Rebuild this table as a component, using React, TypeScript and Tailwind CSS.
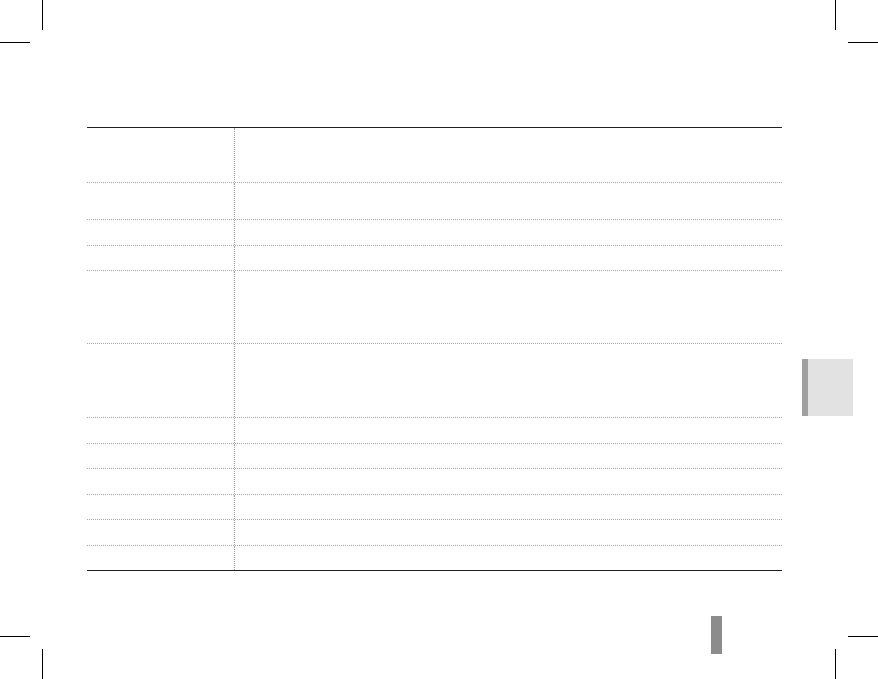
import React from "react";

const rows = [55, 37, 26, 25, 73, 74, 26, 25, 26, 25, 26, 25];

function CropMarks() {
  return (
    <>
      <div className="absolute left-[42px] top-0 w-px h-[30px] bg-black" />
      <div className="absolute left-0 top-[42px] w-[30px] h-px bg-black" />
      <div className="absolute left-[835px] top-0 w-px h-[30px] bg-black" />
      <div className="absolute left-[848px] top-[42px] w-[30px] h-px bg-black" />
      <div className="absolute left-0 top-[636px] w-[30px] h-px bg-black" />
      <div className="absolute left-[42px] top-[649px] w-px h-[30px] bg-black" />
      <div className="absolute left-[848px] top-[636px] w-[30px] h-px bg-black" />
      <div className="absolute left-[835px] top-[649px] w-px h-[30px] bg-black" />
    </>
  );
}

export default function App() {
  return (
    <div
      className="relative w-[878px] h-[679px] bg-white overflow-hidden"
      style={{ fontFamily: '"Liberation Sans", Arial, sans-serif' }}
    >
      <CropMarks />

      <div className="pt-[127px] pl-[87px] flex flex-col">
        <div className="flex items-start">
          {/* table */}
          <div className="w-[695px] border-t border-[#231f20] flex flex-col">
            {rows.map((h, i) => (
              <div
                key={i}
                className={
                  i === rows.length - 1
                    ? "flex box-border border-b border-solid border-[#231f20]"
                    : "flex box-border border-b border-dotted border-[#a8a8a8]"
                }
                style={{ height: h }}
              >
                <div className="w-[148px] h-full border-r border-dotted border-[#9a9a9a]" />
                <div className="flex-1 h-full" />
              </div>
            ))}
          </div>

          {/* side tab */}
          <div className="ml-[20px] mt-[232px] w-[51px] h-[57px] flex">
            <div className="w-[6px] h-full bg-[#a0a0a0]" />
            <div className="flex-1 h-full bg-[#e1e2e1]" />
          </div>
        </div>

        {/* page marker */}
        <div className="ml-[624px] mt-[45px] w-[11px] h-[38px] bg-[#8c8c8c]" />
      </div>
    </div>
  );
}
